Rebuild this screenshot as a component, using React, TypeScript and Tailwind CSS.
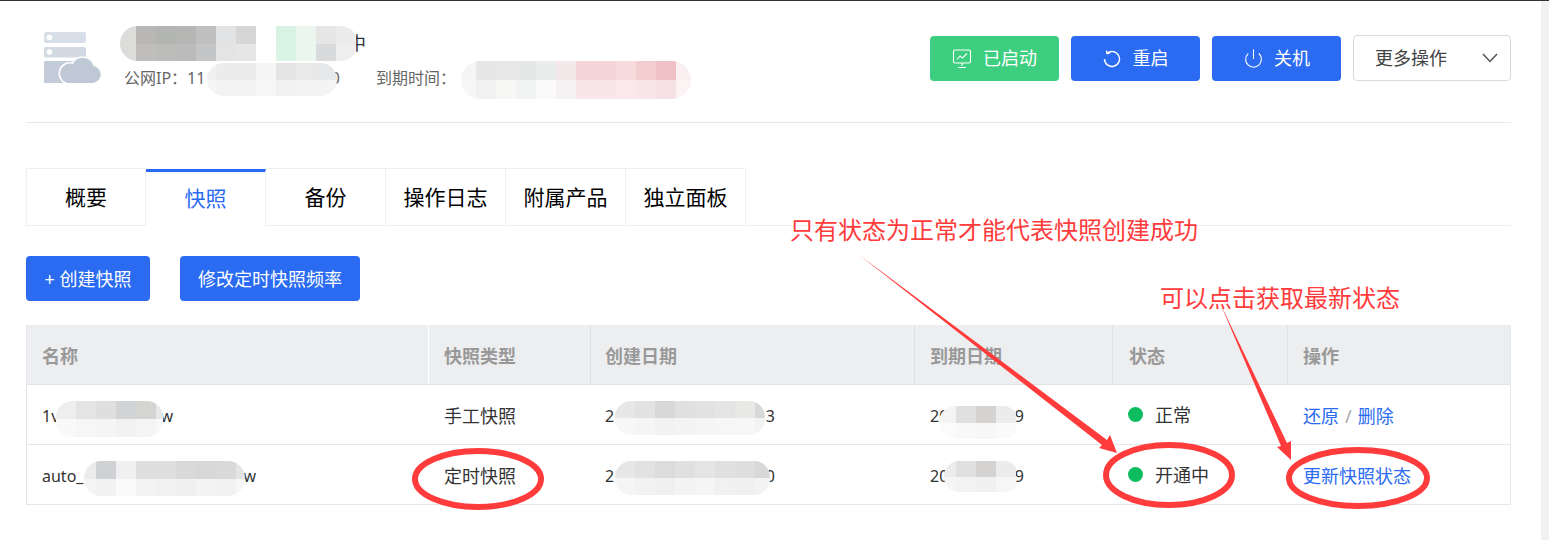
import { Power } from 'lucide-react';

type BlobProps = { className: string; top: string[]; bottom: string[]; };

// mosaic smudges that hide the private values in the screenshot
function Blob({ className, top, bottom }: BlobProps) {
  return (
    <div className={`absolute overflow-hidden flex flex-col ${className}`}>
      <div className="flex flex-1">
        {top.map((c, i) => <div key={i} className={`w-5 shrink-0 ${c}`} />)}
      </div>
      <div className="flex flex-1">
        {bottom.map((c, i) => <div key={i} className={`w-5 shrink-0 ${c}`} />)}
      </div>
    </div>
  );
}

function MonitorIcon() {
  return (
    <svg width="20" height="20" viewBox="0 0 20 20" fill="none" stroke="white" strokeWidth="1.1">
      <rect x="1.5" y="1" width="17" height="13" rx="1.5" />
      <path d="M5 10.5 L8 7 L10.5 9 L15 4.5" />
      <path d="M10 14 V17 M6 18.5 H14" />
    </svg>
  );
}

function RestartIcon() {
  return (
    <svg width="18" height="18" viewBox="0 0 18 18" fill="none" stroke="white" strokeWidth="1.4">
      <path d="M4 3.4 A7.5 7.5 0 1 1 1.5 9" />
      <path d="M3.5 0.6 L4 3.4 L6.9 3.1" />
    </svg>
  );
}

function ServerCloud() {
  return (
    <svg width="58" height="52" viewBox="0 0 58 52" className="shrink-0 mt-[-4px]">
      <rect x="0" y="0" width="42" height="11" rx="2" fill="#d9dfe8" />
      <circle cx="5.5" cy="5.5" r="2.8" fill="white" />
      <rect x="0" y="15" width="42" height="10.5" rx="2" fill="#d2d9e3" />
      <circle cx="5.5" cy="20" r="2.8" fill="white" />
      <rect x="0" y="29" width="30" height="22" rx="1" fill="#c3ccd8" />
      <path d="M23 51 h25 a8.5 8.5 0 0 0 1.5 -16.9 A11 11 0 0 0 29 32 a9.6 9.6 0 0 0 -6 19z" fill="#bfc9d6" stroke="white" strokeWidth="3" paintOrder="stroke" />
    </svg>
  );
}

const tabs = ['概要', '快照', '备份', '操作日志', '附属产品', '独立面板'];
const cols = 'grid grid-cols-[402px_162px_324px_198px_175px_222px]';

export default function App() {
  return (
    <div className="relative h-[540px] w-[1549px] overflow-hidden bg-white text-[#333] font-['Noto_Sans','Noto_Sans_CJK_SC',sans-serif]">
      <div className="h-px bg-[#333]" />
      <div className="flex">
        <main className="w-[1541px] pl-[26px] pr-[30px] pt-[35px]">
          {/* server header */}
          <div className="flex justify-between h-[86px] border-b border-[#e8e8e8] box-content">
            <div className="flex pl-[18px]">
              <ServerCloud />
              <div className="ml-[22px] text-[#666]">
                <div className="pl-[224px] h-[28px] text-[18px] leading-[14px] text-[#333]">中</div>
                <div className="flex items-center text-[16px] leading-6 mt-[2px]">
                  <div className="flex justify-between w-[216px]"><span>公网IP：11</span><span>0</span></div>
                  <span className="ml-9">到期时间：</span>
                </div>
              </div>
            </div>
            <div className="flex gap-3 text-[18px] h-[45px]">
              <button className="w-[129px] flex items-center justify-center gap-[11px] rounded bg-[#3dcf7f] text-white">
                <MonitorIcon />已启动
              </button>
              <button className="w-[129px] flex items-center justify-center gap-[12px] rounded bg-[#2a6bf2] text-white">
                <RestartIcon />重启
              </button>
              <button className="w-[129px] flex items-center justify-center gap-[10px] rounded bg-[#2a6bf2] text-white">
                <Power size={21} strokeWidth={1.3} />关机
              </button>
              <button className="w-[158px] h-[46px] -mt-px flex items-center justify-between pl-[21px] pr-[12px] rounded border border-[#d9d9de] bg-white text-[#444]">
                更多操作
                <svg width="16" height="10" viewBox="0 0 16 10" fill="none" stroke="#555" strokeWidth="1.5">
                  <path d="M1 1 L8 8.5 L15 1" />
                </svg>
              </button>
            </div>
          </div>

          {/* tabs */}
          <div className="mt-[45px] flex h-[58px] border-b border-[#eeeff1]">
            {tabs.map((t, i) => (
              <div
                key={t}
                className={
                  i === 1
                    ? 'w-[120px] h-[57px] mt-px flex items-center justify-center border-t-[3px] border-r border-t-[#2a6bf2] border-r-[#eeeff1] bg-white text-[21px] text-[#2a6bf2]'
                    : i === 0
                      ? 'w-[120px] pt-[2px] flex items-center justify-center border-t border-x border-[#eeeff1] text-[21px] text-black'
                      : 'w-[120px] pt-[2px] flex items-center justify-center border-t border-r border-[#eeeff1] text-[21px] text-black'
                }
              >
                {t}
              </div>
            ))}
          </div>

          {/* actions */}
          <div className="mt-[30px] flex gap-[30px] text-[18px] text-white">
            <button className="w-[124px] h-[45px] pt-px rounded bg-[#2a6bf2]">+ 创建快照</button>
            <button className="w-[180px] h-[45px] pt-px rounded bg-[#2a6bf2]">修改定时快照频率</button>
          </div>

          {/* snapshot table */}
          <div className="mt-[24px] border-x border-b border-[#e5e6ea] text-[18px]">
            <div className={`${cols} h-[60px] bg-[#edeef0] border-b border-[#e2e3e7] font-bold text-[#999]`}>
              <div className="flex items-center pt-[3px] pl-[15px] border-r border-white">名称</div>
              <div className="flex items-center pt-[3px] pl-[15px] border-r border-[#dfe0e4]">快照类型</div>
              <div className="flex items-center pt-[3px] pl-[14px] border-r border-[#dfe0e4]">创建日期</div>
              <div className="flex items-center pt-[3px] pl-[15px] border-r border-[#dfe0e4]">到期日期</div>
              <div className="flex items-center pt-[3px] pl-[16px] border-r border-[#dfe0e4]">状态</div>
              <div className="flex items-center pt-[3px] pl-[15px]">操作</div>
            </div>
            <div className={`${cols} h-[60px] border-b border-[#e5e6ea]`}>
              <div className="flex items-center pt-[2px] pl-[15px] text-[16px]">
                <div className="flex justify-between w-[131px]"><span>1v</span><span>w</span></div>
              </div>
              <div className="flex items-center pt-[3px] pl-[15px]">手工快照</div>
              <div className="flex items-center pt-[2px] pl-[14px] text-[16px]">
                <div className="flex justify-between w-[170px]"><span>2</span><span>3</span></div>
              </div>
              <div className="flex items-center pt-[2px] pl-[15px] text-[16px]">
                <div className="flex justify-between w-[94px]"><span>20</span><span>9</span></div>
              </div>
              <div className="flex items-center pl-[15px] gap-[12px]">
                <span className="size-[15px] rounded-full bg-[#0dbc5e]" /><span className="pt-px">正常</span>
              </div>
              <div className="flex items-center pt-[3px] pl-[15px] text-[#2a6bf2]">
                还原<span className="mx-[6px] text-[#aaa]">/</span>删除
              </div>
            </div>
            <div className={`${cols} h-[59px]`}>
              <div className="flex items-center pt-[2px] pl-[15px] text-[16px]">
                <div className="flex justify-between w-[214px]"><span>auto_</span><span>w</span></div>
              </div>
              <div className="flex items-center pt-[3px] pl-[15px]">定时快照</div>
              <div className="flex items-center pt-[2px] pl-[14px] text-[16px]">
                <div className="flex justify-between w-[170px]"><span>2</span><span>0</span></div>
              </div>
              <div className="flex items-center pt-[2px] pl-[15px] text-[16px]">
                <div className="flex justify-between w-[94px]"><span>20</span><span>9</span></div>
              </div>
              <div className="flex items-center pl-[15px] gap-[12px]">
                <span className="size-[15px] rounded-full bg-[#0dbc5e]" /><span className="pt-px">开通中</span>
              </div>
              <div className="flex items-center pt-[3px] pl-[15px] text-[#2a6bf2]">更新快照状态</div>
            </div>
          </div>
        </main>
        <aside className="w-2 h-[539px] bg-[#f1f1f1]" />
      </div>

      {/* smudges */}
      <Blob
        className="left-[120px] top-[26px] w-[238px] h-[35px] rounded-[18px] [&>div]:-ml-1"
        top={['bg-[#dcdcda]', 'bg-[#b9b8b6]', 'bg-[#b3b5b2]', 'bg-[#b6b6b4]', 'bg-[#c0c0c0]', 'bg-[#e2e3e5]', 'bg-[#d6d6d6]', 'bg-white', 'bg-[#d8f3e4]', 'bg-[#ebf6ef]', 'bg-[#e6e6e6]', 'bg-[#ececec]']}
        bottom={['bg-[#dcdcda]', 'bg-[#bfbebd]', 'bg-[#bcbcbb]', 'bg-[#bbbbbb]', 'bg-[#c4c5c7]', 'bg-[#e4e4e5]', 'bg-[#e6e6e6]', 'bg-white', 'bg-[#d9f3e5]', 'bg-[#ebf6ef]', 'bg-[#d9dadc]', 'bg-[#eeeeee]']}
      />
      <Blob
        className="left-[207px] top-[63px] w-[130px] h-[33px] rounded-[17px] [&>div]:-ml-[11px]"
        top={['bg-[#f0f0f0]', 'bg-[#ececec]', 'bg-[#ebebeb]', 'bg-[#f5f5f5]', 'bg-[#e4e4e4]', 'bg-[#e9e9e9]', 'bg-[#e6e8ea]', 'bg-[#e6e8ea]']}
        bottom={['bg-[#f4f5f4]', 'bg-[#f3f3f3]', 'bg-[#f3f3f3]', 'bg-[#f7f7f7]', 'bg-[#f1f1f1]', 'bg-[#f3f3f3]', 'bg-[#f3f4f3]', 'bg-[#f3f4f3]']}
      />
      <Blob
        className="left-[461px] top-[61px] w-[230px] h-[38px] rounded-[19px] [&>div]:-ml-[5px]"
        top={['bg-[#f5f5f5]', 'bg-[#e7e7e7]', 'bg-[#e8e8e8]', 'bg-[#e6e8e7]', 'bg-[#ebeded]', 'bg-[#f5e8ea]', 'bg-[#f5d5d8]', 'bg-[#f5d5d8]', 'bg-[#f7dadc]', 'bg-[#f4cdd0]', 'bg-[#efc0c6]', 'bg-[#fbf0f1]']}
        bottom={['bg-[#f7f7f7]', 'bg-[#f1f1f1]', 'bg-[#f7f7f5]', 'bg-[#f2f4f4]', 'bg-[#fafafa]', 'bg-[#f6f1f2]', 'bg-[#f8e6e8]', 'bg-[#f8e6e8]', 'bg-[#f9e9eb]', 'bg-[#f7e5e7]', 'bg-[#f6e2e5]', 'bg-[#fcf3f4]']}
      />
      <Blob
        className="left-[56px] top-[401px] w-[107px] h-[36px] rounded-[16px]"
        top={['bg-[#eeeeee]', 'bg-[#e4e4e4]', 'bg-[#dfdfdf]', 'bg-[#d2d3d5]', 'bg-[#d4d4d2]', 'bg-[#e8e8e8]']}
        bottom={['bg-[#f9f9f9]', 'bg-[#f6f6f6]', 'bg-[#f5f5f5]', 'bg-[#f2f2f2]', 'bg-[#f5f5f5]', 'bg-[#f9f9f9]']}
      />
      <Blob
        className="left-[84px] top-[461px] w-[161px] h-[35px] rounded-[17px] [&>div]:-ml-2"
        top={['bg-[#ececec]', 'bg-[#d0d1d4]', 'bg-[#eff0ef]', 'bg-[#dfdfdf]', 'bg-[#dfdfdf]', 'bg-[#d9d9d9]', 'bg-[#d7d7d7]', 'bg-[#d9d9d9]', 'bg-[#e4e4e4]']}
        bottom={['bg-[#f5f5f5]', 'bg-[#f2f2f2]', 'bg-[#fafafa]', 'bg-[#f3f3f3]', 'bg-[#f1f1f1]', 'bg-[#f0f0f0]', 'bg-[#f4f4f4]', 'bg-[#f2f2f2]', 'bg-[#f7f7f7]']}
      />
      <Blob
        className="left-[615px] top-[401px] w-[150px] h-[34px] rounded-[16px]"
        top={['bg-[#e7e7e7]', 'bg-[#e2e2e2]', 'bg-[#d8d8d8]', 'bg-[#e0e0e0]', 'bg-[#e2e2e2]', 'bg-[#e5e5e5]', 'bg-[#e8e8e6]', 'bg-[#d8d8d8]']}
        bottom={['bg-[#f7f7f7]', 'bg-[#f5f5f5]', 'bg-[#f2f2f2]', 'bg-[#f4f4f4]', 'bg-[#f5f5f5]', 'bg-[#f6f6f6]', 'bg-[#f7f7f7]', 'bg-[#f3f3f3]']}
      />
      <Blob
        className="left-[615px] top-[461px] w-[155px] h-[34px] rounded-[16px]"
        top={['bg-[#e7e7e7]', 'bg-[#e2e2e2]', 'bg-[#dcdcdc]', 'bg-[#e0e0e0]', 'bg-[#e4e4e4]', 'bg-[#e0e0e0]', 'bg-[#dedede]', 'bg-[#d8d8d8]']}
        bottom={['bg-[#f5f5f5]', 'bg-[#f2f2f2]', 'bg-[#f0f0f0]', 'bg-[#f4f4f4]', 'bg-[#f5f5f5]', 'bg-[#f1f1f1]', 'bg-[#f0f0f0]', 'bg-[#f3f3f3]']}
      />
      <Blob
        className="left-[939px] top-[406px] w-[80px] h-[33px] rounded-[16px] [&>div]:-ml-[3px]"
        top={['bg-[#f4f4f4]', 'bg-[#e0e0e0]', 'bg-[#d4d3d2]', 'bg-[#ececec]']}
        bottom={['bg-[#fbfbfb]', 'bg-[#f9f9f9]', 'bg-[#f7f7f7]', 'bg-[#fafafa]']}
      />
      <Blob
        className="left-[944px] top-[461px] w-[75px] h-[31px] rounded-[15px] [&>div]:-ml-2"
        top={['bg-[#ececec]', 'bg-[#e0e0e0]', 'bg-[#d4d3d2]', 'bg-[#ececec]']}
        bottom={['bg-[#f5f5f5]', 'bg-[#f3f3f3]', 'bg-[#f0f0f0]', 'bg-[#f6f6f6]']}
      />

      {/* red annotations drawn on top of the screenshot */}
      <svg className="absolute inset-0 pointer-events-none" width="1549" height="540" fill="none">
        <ellipse cx="478" cy="479" rx="63" ry="28" stroke="#ff3b3b" strokeWidth="6" />
        <ellipse cx="1169" cy="475" rx="63" ry="30" stroke="#ff3b3b" strokeWidth="6" />
        <ellipse cx="1358" cy="478" rx="69" ry="28" stroke="#ff3b3b" strokeWidth="6" />
        <polygon points="858,254 1107,440 1110,435 1117,453 1099,448 1102,445" fill="#ff3b3b" />
        <polygon points="1220,303 1287,443 1291,441 1291,460 1277,447 1281,446" fill="#ff3b3b" />
      </svg>
      <div className="absolute left-[790px] top-[212px] text-[24px] leading-9 text-[#ff3b3b] whitespace-nowrap">只有状态为正常才能代表快照创建成功</div>
      <div className="absolute left-[1160px] top-[280px] text-[24px] leading-9 text-[#ff3b3b] whitespace-nowrap">可以点击获取最新状态</div>
    </div>
  );
}
